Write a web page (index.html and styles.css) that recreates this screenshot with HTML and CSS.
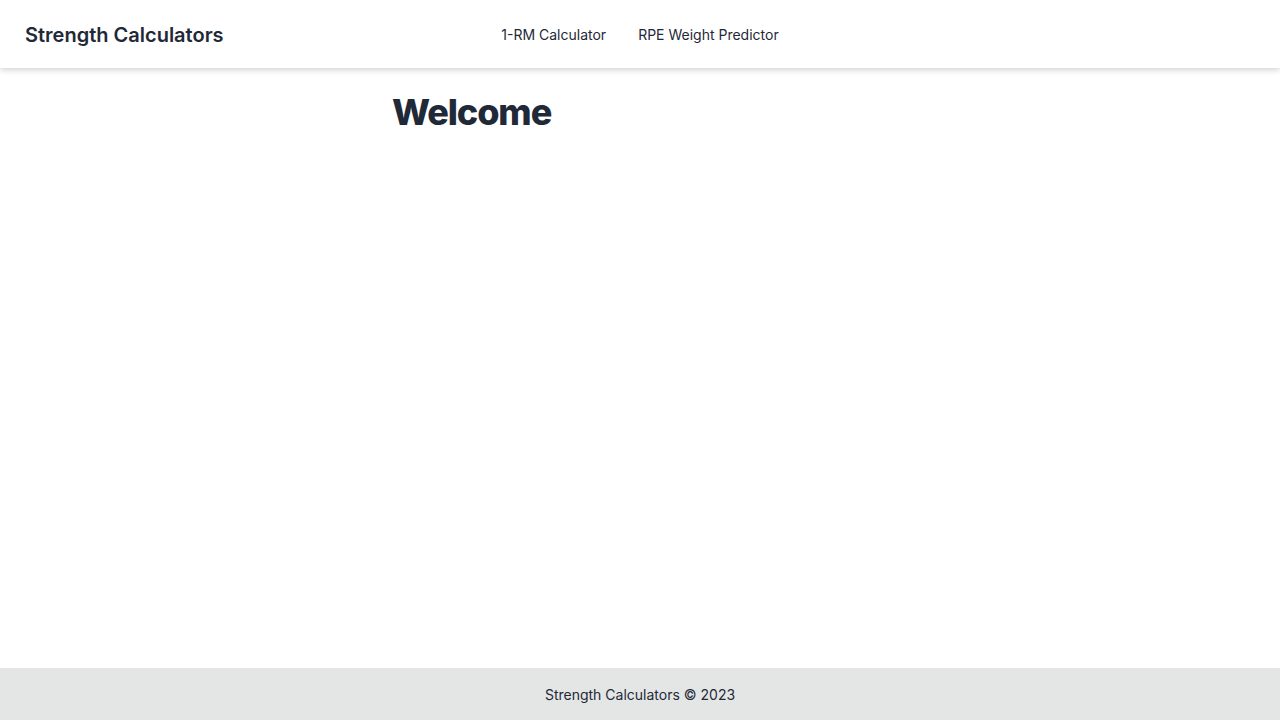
FILE: index.html
```html
<!DOCTYPE html>
<html lang="en">
<head>
<meta charset="utf-8">
<title>Strength Calculators</title>
<link rel="stylesheet" href="styles.css">
</head>
<body>
<div class="page">
  <header class="header">
    <div class="brand">Strength Calculators</div>
    <nav class="nav">
      <a class="nav-link" href="#">1-RM Calculator</a>
      <a class="nav-link" href="#">RPE Weight Predictor</a>
    </nav>
    <div class="spacer"></div>
  </header>
  <main class="main">
    <div class="content">
      <h1 class="title">Welcome</h1>
    </div>
  </main>
  <footer class="footer">Strength Calculators © 2023</footer>
</div>
</body>
</html>
```
FILE: styles.css
```css
* { box-sizing: border-box; }
html, body { margin: 0; padding: 0; }
body {
  font-family: Inter, "Noto Sans", sans-serif;
  color: #1f2937;
  background: #ffffff;
}
.page {
  min-height: 720px;
  display: flex;
  flex-direction: column;
}
.header {
  height: 68px;
  display: grid;
  grid-template-columns: 1fr auto 1fr;
  align-items: center;
  padding: 0 25px;
  background: #ffffff;
  box-shadow: 0 2px 6px rgba(0, 0, 0, 0.18);
  position: relative;
  z-index: 1;
}
.brand {
  font-size: 20px;
  font-weight: 600;
  color: #1f2937;
  padding-top: 2px;
}
.nav {
  display: flex;
  gap: 32px;
}
.nav-link {
  font-size: 14px;
  color: #1f2937;
  text-decoration: none;
}
.main {
  flex: 1;
}
.content {
  padding-left: 392px;
  padding-top: 23px;
}
.title {
  margin: 0;
  font-size: 36px;
  font-weight: 800;
  letter-spacing: -1.1px;
  line-height: 1.2;
  color: #1f2937;
}
.footer {
  height: 52px;
  background: #e4e6e5;
  display: flex;
  align-items: center;
  justify-content: center;
  font-size: 14px;
  color: #1f2937;
}
```
